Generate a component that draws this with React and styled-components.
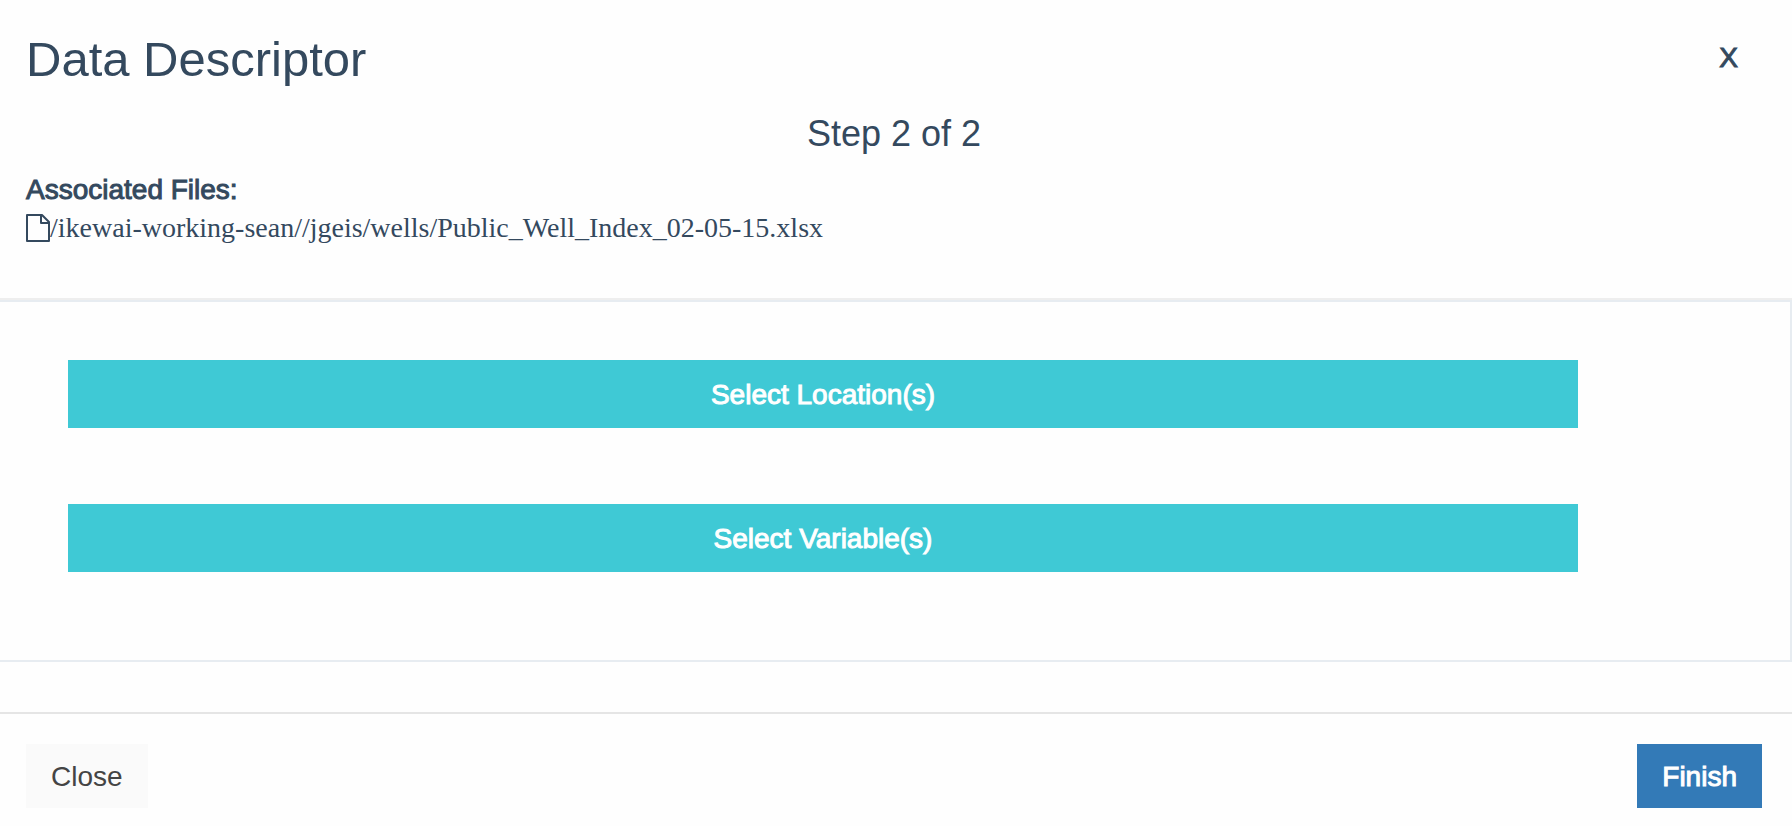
import React from "react";
import styled, { createGlobalStyle } from "styled-components";

const GlobalStyle = createGlobalStyle`
  * {
    box-sizing: border-box;
  }
  body {
    margin: 0;
    background: #fefefe;
    color: #34495e;
    font-family: "Liberation Sans", Arial, sans-serif;
    font-size: 28px;
    line-height: 40px;
  }
`;

const Header = styled.header`
  padding: 32px 30px 52px 26px;
  border-bottom: 2px solid #eee;
`;

const TitleRow = styled.div`
  display: flex;
  justify-content: space-between;
  align-items: flex-start;
  padding-right: 22px;
`;

const Title = styled.h1`
  margin: 0;
  font-size: 49px;
  font-weight: 400;
  line-height: 54px;
`;

const DismissButton = styled.button`
  padding: 6px 2px;
  border: 0;
  background: none;
  color: inherit;
  font: inherit;
  line-height: 40px;
  -webkit-text-stroke: 1px currentColor;
  cursor: pointer;
`;

const Step = styled.h2`
  margin: 24px 0 12px;
  font-size: 36px;
  font-weight: 400;
  line-height: 48px;
  text-align: center;
`;

const FilesHeading = styled.h3`
  margin: 0;
  font-size: 28px;
  font-weight: 400;
  line-height: 40px;
  -webkit-text-stroke: 1px currentColor;
`;

const FileList = styled.ul`
  margin: 0;
  padding: 0;
  list-style: none;
`;

const FileItem = styled.li`
  display: flex;
  align-items: center;
  font-family: "Liberation Serif", "Times New Roman", serif;
  font-size: 28px;
  line-height: 36px;
`;

const FileIcon = styled.svg`
  flex: none;
  width: 24px;
  height: 28px;
`;

const Panel = styled.main`
  display: flex;
  flex-direction: column;
  gap: 76px;
  padding: 58px 212px 88px 68px;
  border: 2px solid #e7ecf1;
  border-left: 0;
`;

const SelectButton = styled.button`
  width: 100%;
  padding: 15px 24px 13px;
  border: 0;
  background: #3fc9d5;
  color: #fff;
  font: inherit;
  line-height: 40px;
  -webkit-text-stroke: 1px currentColor;
  cursor: pointer;
`;

const Footer = styled.footer`
  display: flex;
  justify-content: space-between;
  margin-top: 50px;
  padding: 30px 30px 18px 26px;
  border-top: 2px solid #e5e5e5;
`;

const ActionButton = styled.button`
  padding: 13px 25px 11px;
  border: 0;
  background: ${(p) => (p.$primary ? "#337ab7" : "#fafafa")};
  color: ${(p) => (p.$primary ? "#fff" : "#444")};
  font: inherit;
  line-height: 40px;
  -webkit-text-stroke: ${(p) => (p.$primary ? "1px currentColor" : "0")};
  cursor: pointer;
`;

const files = ["/ikewai-working-sean//jgeis/wells/Public_Well_Index_02-05-15.xlsx"];

export default function App() {
  return (
    <>
      <GlobalStyle />
      <Header>
        <TitleRow>
          <Title>Data Descriptor</Title>
          <DismissButton type="button">X</DismissButton>
        </TitleRow>
        <Step>Step 2 of 2</Step>
        <FilesHeading>Associated Files:</FilesHeading>
        <FileList>
          {files.map((path) => (
            <FileItem key={path}>
              <FileIcon viewBox="0 0 24 28" fill="none" stroke="currentColor" strokeWidth="2" strokeLinejoin="round" aria-hidden="true">
                <path d="M1 1H16L23 8V27H1Z" />
                <path d="M15 1V9H23" />
              </FileIcon>
              {path}
            </FileItem>
          ))}
        </FileList>
      </Header>
      <Panel>
        <SelectButton type="button">Select Location(s)</SelectButton>
        <SelectButton type="button">Select Variable(s)</SelectButton>
      </Panel>
      <Footer>
        <ActionButton type="button">Close</ActionButton>
        <ActionButton type="button" $primary>Finish</ActionButton>
      </Footer>
    </>
  );
}
